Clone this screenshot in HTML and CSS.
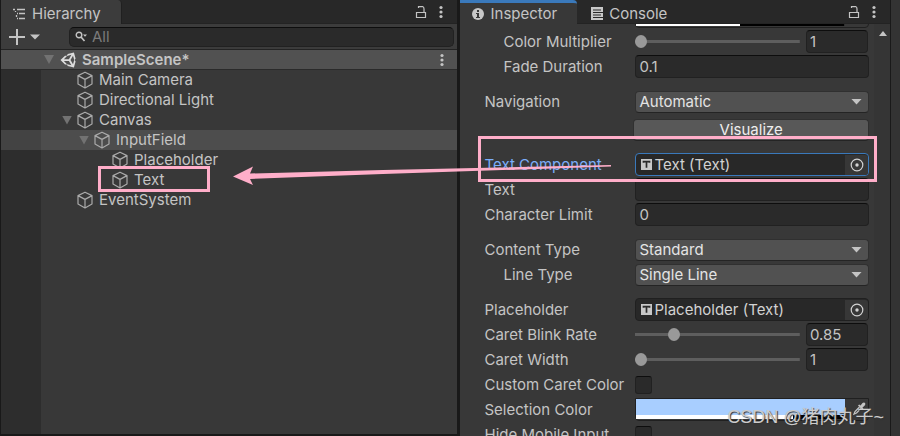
FILE: index.html
```
<!DOCTYPE html>
<html lang="en">
<head>
  <meta charset="UTF-8" />
  <meta name="viewport" content="width=device-width, initial-scale=1.0" />
  <title>Hierarchy / Inspector</title>
  <link rel="stylesheet" href="styles.css">
</head>
<body>
  <!-- shared icons -->
  <svg class="sprite" aria-hidden="true">
    <symbol id="cube" viewBox="0 0 18 18">
      <path d="M9 1.2 16 4.6V13L9 17 2 13V4.6ZM2 4.6 9 8.4 16 4.6M9 8.4V17" fill="none" stroke="currentColor" stroke-width="1.2" stroke-linejoin="round"/>
    </symbol>
    <symbol id="lock" viewBox="0 0 12 14">
      <path d="M1.5 7.5h9v5h-9zM3.5 3V1.700h4.500Q9 2 9 4V7" fill="none" stroke="currentColor" stroke-width="1.200"/>
    </symbol>
    <symbol id="dots" viewBox="0 0 4 14">
      <circle cx="2" cy="2.500" r="1.600" fill="currentColor"/>
      <circle cx="2" cy="7" r="1.600" fill="currentColor"/>
      <circle cx="2" cy="11.500" r="1.600" fill="currentColor"/>
    </symbol>
    <symbol id="target" viewBox="0 0 14 14">
      <circle cx="7" cy="7" r="5.800" fill="none" stroke="currentColor" stroke-width="1.200"/>
      <circle cx="7" cy="7" r="1.700" fill="currentColor"/>
    </symbol>
    <symbol id="component" viewBox="0 0 11 11">
      <path d="M0 0h11v11H0z" fill="#c8c8c8"/>
      <path d="M2.500 3.800V2.700h6v1.100M5.500 2.700v6" fill="none" stroke="#2a2a2a" stroke-width="1.700"/>
    </symbol>
    <symbol id="dropper" viewBox="0 0 14 14">
      <path d="M6 3.500 7.200 2.500 8.500 3.500 10.500 1Q12.500 0 13.300 1.500 13.500 3 12.500 3.800L10.500 5.500 11.500 7 10.500 8Z" fill="currentColor"/>
      <path d="M7.500 5 3 9.500 2 12 4.500 11 9 6.500" fill="none" stroke="currentColor" stroke-width="1.300"/>
    </symbol>
  </svg>

  <main class="editor">
    <section class="panel hierarchy">
      <header class="tabs">
        <button class="tab active">
          <svg width="13" height="12" viewBox="0 0 13 12"><path d="M0 1.500h2M4 1.500h8M4 5.500h1M6 5.500h6M4 10.500h1M6 10.500h6M2.500 3v1M3.500 7v2" fill="none" stroke="currentColor" stroke-width="1.300"/></svg>
          Hierarchy
        </button>
        <div class="tab-tools">
          <button aria-label="Lock"><svg width="12" height="14"><use href="#lock"/></svg></button>
          <button aria-label="Menu"><svg width="4" height="14"><use href="#dots"/></svg></button>
        </div>
      </header>

      <div class="toolbar">
        <button class="add" aria-label="Create">
          <svg width="31" height="16" viewBox="0 0 31 16"><path d="M8 0v16M0 8h16" stroke="currentColor" stroke-width="2"/><path d="M21 5.500h10l-5 5z" fill="currentColor"/></svg>
        </button>
        <label class="search">
          <svg width="13" height="12" viewBox="0 0 13 12"><circle cx="4" cy="4" r="2.800" fill="none" stroke="currentColor" stroke-width="1.400"/><path d="m6 6 3.500 4" stroke="currentColor" stroke-width="1.700"/><path d="M8 3.500h4L10 5.800z" fill="currentColor"/></svg>
          <input type="search" placeholder="All" aria-label="Search">
        </label>
      </div>

      <div class="scene">
        <i class="fold"></i>
        <svg class="unity" width="16" height="16" viewBox="0 0 512 512"><path fill="currentColor" fill-rule="evenodd" d="M498 206 445 15 248 66 219 116H160L16 256 160 396H219L248 446 445 497 498 306 468 256ZM224 124 365 88 285 228H124ZM224 388 124 284H285L365 424ZM416 394 336 256 416 116 455 256Z"/></svg>
        <span>SampleScene*</span>
        <button aria-label="Scene menu"><svg width="4" height="14"><use href="#dots"/></svg></button>
      </div>

      <ul class="tree">
        <li class="lv1"><svg class="cube"><use href="#cube"/></svg>Main Camera</li>
        <li class="lv1"><svg class="cube"><use href="#cube"/></svg>Directional Light</li>
        <li class="lv1"><i class="fold"></i><svg class="cube"><use href="#cube"/></svg>Canvas</li>
        <li class="lv2 selected"><i class="fold"></i><svg class="cube"><use href="#cube"/></svg>InputField</li>
        <li class="lv3"><svg class="cube"><use href="#cube"/></svg>Placeholder</li>
        <li class="lv3"><svg class="cube"><use href="#cube"/></svg>Text</li>
        <li class="lv1"><svg class="cube"><use href="#cube"/></svg>EventSystem</li>
      </ul>
    </section>

    <section class="panel inspector">
      <header class="tabs">
        <button class="tab active focused">
          <svg width="12" height="12" viewBox="0 0 12 12"><circle cx="6" cy="6" r="6" fill="#c8c8c8"/><path d="M5 2h2v2H5zM4 5h3v4h1v1H4V9h1V6H4z" fill="#383838"/></svg>
          Inspector
        </button>
        <button class="tab">
          <svg width="12" height="13" viewBox="0 0 12 13"><path d="M0 0h12v13H0z" fill="#c8c8c8"/><path d="M2 3h8M2 5.500h10M2 8h8M2 10.500h10" stroke="#282828" stroke-width="1.100"/></svg>
          Console
        </button>
        <div class="tab-tools">
          <button aria-label="Lock"><svg width="12" height="14"><use href="#lock"/></svg></button>
          <button aria-label="Menu"><svg width="4" height="14"><use href="#dots"/></svg></button>
        </div>
      </header>

      <div class="scroll-area">
        <form class="props">
          <div class="row">
            <span class="name"></span>
            <div class="color">
              <button type="button" class="swatch disabled-color" aria-label="Disabled color"></button>
              <button type="button" class="pick" aria-label="Pick color"></button>
            </div>
          </div>
          <div class="row">
            <label class="name sub" for="mult">Color Multiplier</label>
            <input type="range" min="1" max="5" value="1" aria-label="Color Multiplier slider">
            <input type="text" class="num" id="mult" value="1">
          </div>
          <div class="row">
            <label class="name sub" for="fade">Fade Duration</label>
            <input type="text" id="fade" value="0.1">
          </div>

          <div class="row group">
            <label class="name" for="nav">Navigation</label>
            <div class="drop"><select id="nav"><option>Automatic</option></select></div>
          </div>
          <div class="row visualize">
            <button type="button">Visualize</button>
          </div>

          <div class="row group">
            <span class="name linked">Text Component</span>
            <div class="object focused">
              <svg width="11" height="11"><use href="#component"/></svg>
              <span>Text (Text)</span>
              <button type="button" aria-label="Select object"><svg width="14" height="14"><use href="#target"/></svg></button>
            </div>
          </div>
          <div class="row">
            <label class="name" for="text">Text</label>
            <input type="text" id="text" value="">
          </div>
          <div class="row">
            <label class="name" for="limit">Character Limit</label>
            <input type="text" id="limit" value="0">
          </div>

          <div class="row group">
            <label class="name" for="ctype">Content Type</label>
            <div class="drop"><select id="ctype"><option>Standard</option></select></div>
          </div>
          <div class="row">
            <label class="name sub" for="ltype">Line Type</label>
            <div class="drop"><select id="ltype"><option>Single Line</option></select></div>
          </div>

          <div class="row group">
            <span class="name">Placeholder</span>
            <div class="object">
              <svg width="11" height="11"><use href="#component"/></svg>
              <span>Placeholder (Text)</span>
              <button type="button" aria-label="Select object"><svg width="14" height="14"><use href="#target"/></svg></button>
            </div>
          </div>
          <div class="row">
            <label class="name" for="blink">Caret Blink Rate</label>
            <input type="range" min="0" max="4" step="0.01" value="0.85" aria-label="Caret Blink Rate slider">
            <input type="text" class="num" id="blink" value="0.85">
          </div>
          <div class="row">
            <label class="name" for="caret">Caret Width</label>
            <input type="range" min="1" max="5" value="1" aria-label="Caret Width slider">
            <input type="text" class="num" id="caret" value="1">
          </div>
          <div class="row">
            <label class="name" for="custom">Custom Caret Color</label>
            <input type="checkbox" id="custom">
          </div>
          <div class="row">
            <span class="name">Selection Color</span>
            <div class="color">
              <button type="button" class="swatch selection-color" aria-label="Selection color"></button>
              <button type="button" class="pick" aria-label="Pick color"><svg width="14" height="14"><use href="#dropper"/></svg></button>
            </div>
          </div>
          <div class="row">
            <label class="name" for="hide">Hide Mobile Input</label>
            <input type="checkbox" id="hide">
          </div>
        </form>
        <div class="scrollbar"></div>
      </div>
    </section>
    <div class="edge"></div>

    <!-- annotations drawn over the editor -->
    <div class="mark mark-item"></div>
    <div class="mark mark-field"></div>
    <svg class="arrow" width="378" height="24" viewBox="0 0 378 24"><path d="M0 13.500 20 3.500 17 10.500 150 7 378 2V3.500L150 11 17 16 20 22Z" fill="#ffaec9"/></svg>
    <div class="watermark">CSDN @猪肉丸子~</div>
  </main>
</body>
</html>
```
FILE: styles.css
```
* {
  margin: 0;
  padding: 0;
  box-sizing: border-box;
}
body {
  background: #191919;
  color: #c4c4c4;
  font-family: Inter, "Noto Sans CJK SC", sans-serif;
  font-size: 15px;
  line-height: 20px;
  overflow: hidden;
}
button, input, select {
  font: inherit;
  color: inherit;
  border: none;
  background: none;
  outline: none;
}
svg {
  display: block;
  flex: none;
}
.sprite {
  position: absolute;
  width: 0;
  height: 0;
}
.editor {
  position: relative;
  display: flex;
  height: 100vh;
  overflow: hidden;
}
.panel {
  display: flex;
  flex-direction: column;
  min-width: 0;
  background: #383838;
}
.hierarchy {
  flex: 457;
  border-left: 1px solid #191919;
  border-bottom: 2px solid #191919;
}
.inspector {
  flex: 430;
  margin-left: 3px;
}
.edge {
  flex: 9;
  margin-left: 1px;
  background: #333;
}

/* tabs */
.tabs {
  display: flex;
  flex: none;
  height: 24px;
  background: #282828;
  border-bottom: 1px solid #232323;
}
.tab {
  display: flex;
  align-items: center;
  gap: 6px;
  height: 24px;
  padding: 3px 20px 0 12px;
  border-right: 1px solid #202020;
}
.tab.active {
  background: #3c3c3c;
  border-radius: 0 4px 0 0;
}
.tab.focused {
  background: #383838;
  border-top: 3px solid #3a79bb;
  padding-top: 0;
}
.inspector .tab {
  border-right: none;
}
.inspector .tab + .tab {
  padding-left: 14px;
}
.tab-tools {
  display: flex;
  align-items: center;
  gap: 12px;
  margin-left: auto;
  padding-right: 14px;
}

/* hierarchy */
.toolbar {
  display: flex;
  align-items: center;
  flex: none;
  height: 26px;
  padding: 0 3px 0 8px;
  background: #3c3c3c;
  border-bottom: 1px solid #232323;
}
.add {
  width: 60px;
}
.search {
  display: flex;
  align-items: center;
  flex: 1;
  gap: 4px;
  height: 20px;
  padding: 0 5px;
  background: #2a2a2a;
  border: 1px solid #212121;
  border-top-color: #0d0d0d;
  border-radius: 5px;
}
.search input {
  flex: 1;
  min-width: 0;
  height: 18px;
}
.search input::placeholder {
  color: #7b7b7b;
  opacity: 1;
}
.scene {
  display: flex;
  align-items: center;
  flex: none;
  height: 20px;
  padding: 0 13px 0 43px;
  background: #515151;
  border-bottom: 1px solid #2a2a2a;
  font-weight: 600;
}
.scene button {
  margin-left: auto;
}
.unity {
  margin: 0 6px;
  color: #ddd;
}
.fold {
  flex: none;
  width: 10px;
  height: 9px;
  background: #727272;
  clip-path: polygon(0 0, 100% 0, 50% 100%);
}
.tree {
  flex: 1;
  list-style: none;
  background: linear-gradient(to right, #2d2d2d 40px, #383838 40px);
}
.tree li {
  display: flex;
  align-items: center;
  height: 20px;
}
.cube {
  width: 18px;
  height: 18px;
  margin: 0 5px 0 75px;
  color: #aaa;
}
.lv2 .cube {
  margin-left: 93px;
}
.lv3 .cube {
  margin-left: 110px;
}
.tree .fold {
  margin-left: 61px;
}
.tree .lv2 .fold {
  margin-left: 78px;
}
.tree .fold + .cube {
  margin-left: 4px;
}
.selected {
  background: linear-gradient(to right, #434343 40px, #4d4d4d 40px);
}

/* inspector */
.scroll-area {
  display: flex;
  flex: 1;
  min-height: 0;
  overflow: hidden;
}
.props {
  display: flex;
  flex-direction: column;
  flex: 1;
  gap: 2px;
  min-width: 0;
  margin-top: -19px;
  padding: 0 5px 0 24px;
}
.row {
  display: flex;
  align-items: center;
  flex: none;
  height: 23px;
}
.group {
  margin-top: 10px;
}
.name {
  flex: none;
  width: 151px;
  white-space: nowrap;
}
.sub {
  padding-left: 19px;
}
.linked {
  color: #7baefa;
}
input[type="text"] {
  flex: 1;
  min-width: 0;
  height: 23px;
  padding: 0 3px;
  background: #2a2a2a;
  border: 1px solid #212121;
  border-top-color: #0d0d0d;
  border-radius: 4px;
}
input.num {
  flex: none;
  width: 62px;
  margin: 0 1px 0 6px;
}
input[type="range"] {
  appearance: none;
  flex: 1;
  min-width: 0;
  height: 14px;
  background: linear-gradient(#5e5e5e, #5e5e5e) center / 100% 3px no-repeat;
}
input[type="range"]::-webkit-slider-thumb {
  appearance: none;
  width: 12px;
  height: 13px;
  border-radius: 50%;
  background: #999;
}
input[type="checkbox"] {
  appearance: none;
  width: 17px;
  height: 18px;
  background: #2a2a2a;
  border: 1px solid #212121;
  border-top-color: #0d0d0d;
  border-radius: 3px;
}
.drop {
  position: relative;
  flex: 1;
}
.drop select {
  display: block;
  appearance: none;
  width: 100%;
  height: 22px;
  padding: 0 3px 1px;
  background: #515151;
  border: 1px solid #303030;
  border-bottom-color: #242424;
  border-radius: 4px;
  color: #e4e4e4;
}
.drop::after {
  content: "";
  position: absolute;
  top: 8px;
  right: 7px;
  width: 11px;
  height: 6px;
  background: #c4c4c4;
  clip-path: polygon(0 0, 100% 0, 50% 100%);
}
.visualize {
  margin-top: 3px;
  padding-left: 149px;
}
.visualize button {
  flex: 1;
  height: 22px;
  background: #585858;
  border: 1px solid #303030;
  border-bottom-color: #242424;
  border-radius: 4px;
  color: #eee;
}
.object {
  display: flex;
  align-items: center;
  flex: 1;
  gap: 2px;
  height: 23px;
  padding-left: 5px;
  background: #282828;
  border: 1px solid #202020;
  border-radius: 4px;
  color: #d2d2d2;
}
.object.focused {
  border-color: #3a79bb;
}
.object button {
  display: flex;
  align-items: center;
  justify-content: center;
  width: 23px;
  height: 20px;
  margin-left: auto;
  background: #373737;
  border-radius: 0 3px 3px 0;
}
.color {
  display: flex;
  flex: 1;
  height: 23px;
  border: 1px solid #202020;
  border-radius: 0 0 4px 4px;
}
.swatch {
  flex: 1;
  height: 20px;
}
.disabled-color {
  background: linear-gradient(to right, #fff 50%, #000 50%) bottom / 100% 4px no-repeat #c8c8c8;
}
.selection-color {
  background: linear-gradient(to right, #fff 75%, #000 75%) bottom / 100% 4px no-repeat #a8ceff;
}
.pick {
  display: flex;
  justify-content: center;
  width: 23px;
  padding: 3px 0 0 4px;
}
.scrollbar {
  width: 16px;
  background: #353535;
}
.scrollbar::before {
  content: "";
  display: block;
  width: 8px;
  height: 5px;
  margin: 7px 0 0 5px;
  background: #c4c4c4;
  clip-path: polygon(50% 0, 100% 100%, 0 100%);
}

/* annotations */
.mark {
  position: absolute;
  border: 3px solid #ffaec9;
}
.mark-item {
  left: 98px;
  top: 166px;
  width: 112px;
  height: 26px;
}
.mark-field {
  left: 478px;
  top: 136px;
  width: 399px;
  height: 46px;
}
.arrow {
  position: absolute;
  left: 233px;
  top: 163px;
}
.watermark {
  position: absolute;
  right: 16px;
  bottom: 9px;
  font-family: "Liberation Sans", "Noto Sans CJK SC", sans-serif;
  font-size: 18px;
  color: #ccc;
  text-shadow: 1px 1px 1px #333;
  white-space: nowrap;
}
```
